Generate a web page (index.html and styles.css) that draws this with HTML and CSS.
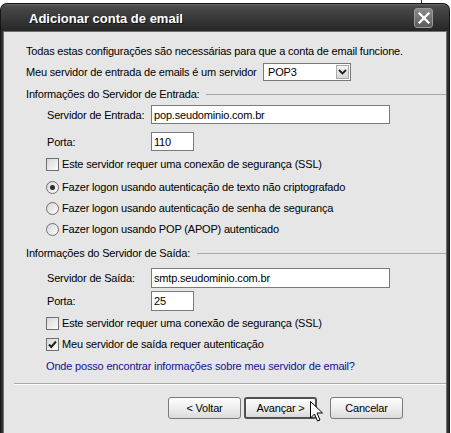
FILE: index.html
```html
<!DOCTYPE html>
<html lang="pt-BR">
<head>
    <meta charset="UTF-8" />
    <title>Adicionar conta de email</title>
    <link rel="stylesheet" href="styles.css">
</head>
<body>
    <div class="window">
        <div class="titlebar">
            <span class="title">Adicionar conta de email</span>
            <span class="close">
                <svg width="12" height="12" viewBox="0 0 12 12"><path d="M1.5 1.5 L10.5 10.5 M10.5 1.5 L1.5 10.5" stroke="#fff" stroke-width="2.2" stroke-linecap="square"/></svg>
            </span>
        </div>
        <div class="frame">
            <div class="client">
                <div class="row r-intro">Todas estas configurações são necessárias para que a conta de email funcione.</div>
                <div class="row r-type">
                    <span class="type-label">Meu servidor de entrada de emails é um servidor</span>
                    <div class="select">
                        <span class="select-value">POP3</span>
                        <span class="drop">
                            <svg width="9" height="6" viewBox="0 0 9 6"><path d="M1 1 L4.5 4.5 L8 1" fill="none" stroke="#222" stroke-width="1.8"/></svg>
                        </span>
                    </div>
                </div>

                <div class="group-head gh-in"><span>Informações do Servidor de Entrada:</span><span class="rule"></span></div>
                <div class="row sub r-field">
                    <span class="flabel">Servidor de Entrada:</span>
                    <div class="input wide">pop.seudominio.com.br</div>
                </div>
                <div class="row sub r-port">
                    <span class="flabel">Porta:</span>
                    <div class="input short">110</div>
                </div>
                <div class="row sub r-ssl">
                    <span class="check"></span>
                    <span>Este servidor requer uma conexão de segurança (SSL)</span>
                </div>
                <div class="row sub r-rad1">
                    <span class="radio on"></span>
                    <span>Fazer logon usando autenticação de texto não criptografado</span>
                </div>
                <div class="row sub r-rad2">
                    <span class="radio"></span>
                    <span>Fazer logon usando autenticação de senha de segurança</span>
                </div>
                <div class="row sub r-rad3">
                    <span class="radio"></span>
                    <span>Fazer logon usando POP (APOP) autenticado</span>
                </div>

                <div class="group-head gh-out"><span>Informações do Servidor de Saída:</span><span class="rule"></span></div>
                <div class="row sub r-field2">
                    <span class="flabel">Servidor de Saída:</span>
                    <div class="input wide">smtp.seudominio.com.br</div>
                </div>
                <div class="row sub r-port2">
                    <span class="flabel">Porta:</span>
                    <div class="input short">25</div>
                </div>
                <div class="row sub r-ssl2">
                    <span class="check"></span>
                    <span>Este servidor requer uma conexão de segurança (SSL)</span>
                </div>
                <div class="row sub r-auth">
                    <span class="check">
                        <svg width="11" height="11" viewBox="0 0 11 11"><path d="M2 5.5 L4.3 8 L9 2.5" fill="none" stroke="#222" stroke-width="2"/></svg>
                    </span>
                    <span>Meu servidor de saída requer autenticação</span>
                </div>
                <div class="row sub r-link"><a class="help" href="#">Onde posso encontrar informações sobre meu servidor de email?</a></div>

                <div class="separator"></div>

                <div class="buttons">
                    <span class="btn">&lt; Voltar</span>
                    <span class="btn default">Avançar &gt;</span>
                    <span class="btn cancel">Cancelar</span>
                </div>
            </div>
        </div>

        <!-- mouse pointer resting on the Avançar button -->
        <svg class="cursor" width="14" height="22" viewBox="0 0 14 22"><path d="M0.5 0.5 V17 L4.5 13 L7.5 20 L10 19 L7 12 H12.5 Z" fill="#fff" stroke="#000" stroke-width="1"/></svg>
    </div>
</body>
</html>
```

FILE: styles.css
```css
body {
    margin: 0;
    font-family: "Liberation Sans", Arial, sans-serif;
    font-size: 11px;
    color: #000;
    background: #fff linear-gradient(#2a2a2a, #2a2a2a) 421px 0 / 1px 4px no-repeat;
}

.window {
    position: relative;
    margin-top: 3px;
    width: 450px;
    height: 430px;
    box-sizing: border-box;
    border: 1px solid #151515;
    border-bottom: none;
    border-radius: 7px 7px 0 0;
    background: #2f2f2f;
    display: flex;
    flex-direction: column;
    overflow: hidden;
}

.titlebar {
    height: 27px;
    flex: 0 0 27px;
    display: flex;
    align-items: center;
    padding-left: 28px;
    background: linear-gradient(#6a6a6a 0, #4a4a4a 2px, #3a3a3a 50%, #262626 100%);
}

.title {
    color: #fff;
    font-weight: bold;
    font-size: 13px;
    text-shadow: 1px 1px 0 #111;
    padding-top: 1px;
}

.close {
    margin-left: auto;
    margin-right: 16px;
    width: 17px;
    height: 18px;
    border: 1px solid #9a9a9a;
    border-radius: 3px;
    background: linear-gradient(#8c8c8c, #5c5c5c);
    display: flex;
    align-items: center;
    justify-content: center;
}

.frame {
    flex: 1;
    display: flex;
    padding: 0 2px 0 2px;
}

.client {
    flex: 1;
    display: flex;
    flex-direction: column;
    background: #e6e6e6;
    border: 1px solid #707070;
    border-bottom: none;
    padding: 10px 0 0 22px;
    letter-spacing: -0.18px;
}

.row {
    display: flex;
    align-items: center;
    white-space: nowrap;
}

.sub {
    padding-left: 21px;
}

.r-intro { height: 18px; }
.r-type { height: 23px; }
.r-field { height: 19px; }
.r-port { height: 19px; margin-top: 8px; }
.r-ssl { height: 26px; padding-left: 20px; }
.r-rad1 { height: 20px; padding-left: 20px; }
.r-rad2 { height: 22px; padding-left: 20px; }
.r-rad3 { height: 20px; padding-left: 20px; }
.r-field2 { height: 20px; margin-top: 1px; }
.r-port2 { height: 20px; margin-top: 3px; }
.r-ssl2 { height: 24px; padding-left: 20px; }
.r-auth { height: 18px; padding-left: 20px; }
.r-link { height: 26px; padding-left: 20px; }

.type-label {
    flex: 0 0 237px;
}

.select {
    width: 86px;
    height: 16px;
    border: 1px solid #7a7a7a;
    background: #fff;
    display: flex;
    align-items: center;
}

.select-value {
    padding-left: 4px;
    flex: 1;
}

.drop {
    width: 13px;
    height: 14px;
    margin-right: 1px;
    border: 1px solid #a9a9a9;
    box-sizing: border-box;
    background: linear-gradient(#f4f4f4, #d6d6d6);
    display: flex;
    align-items: center;
    justify-content: center;
}

.group-head {
    display: flex;
    align-items: center;
    white-space: nowrap;
}

.gh-in { height: 22px; }
.gh-out { height: 28px; }

.rule {
    flex: 1;
    height: 0;
    margin-left: 7px;
    border-top: 1px solid #a8a8a8;
}

.flabel {
    flex: 0 0 104px;
}

.input {
    box-sizing: border-box;
    height: 100%;
    border: 1px solid #7a7a7a;
    background: #fff;
    padding-left: 2px;
    display: flex;
    align-items: center;
}

.wide { width: 239px; }
.short { width: 43px; }

.check {
    width: 13px;
    height: 13px;
    box-sizing: border-box;
    border: 1px solid #6f6f6f;
    background: linear-gradient(135deg, #d8d8d8, #fbfbfb);
    margin-right: 3px;
    display: flex;
    align-items: center;
    justify-content: center;
}

.radio {
    width: 13px;
    height: 13px;
    box-sizing: border-box;
    border: 1px solid #6f6f6f;
    border-radius: 50%;
    background: linear-gradient(135deg, #d8d8d8, #fbfbfb);
    margin-right: 3px;
    display: flex;
    align-items: center;
    justify-content: center;
}

.radio.on::after {
    content: "";
    width: 5px;
    height: 5px;
    border-radius: 50%;
    background: #2a2a2a;
}

.help {
    color: #12128c;
    text-decoration: none;
}

.separator {
    margin: 4px 0 0 -12px;
    border-top: 1px solid #a8a8a8;
    border-bottom: 1px solid #fbfbfb;
}

.buttons {
    margin-top: 12px;
    display: flex;
    justify-content: flex-end;
    gap: 3px;
    padding-right: 43px;
}

.btn {
    width: 73px;
    height: 22px;
    box-sizing: border-box;
    border: 1px solid #7a7a7a;
    border-radius: 3px;
    background: linear-gradient(#fdfdfd, #ebebeb 60%, #d9d9d9);
    display: flex;
    align-items: center;
    justify-content: center;
}

.btn.default {
    border: 2px solid #505050;
}

.btn.cancel {
    margin-left: 10px;
}

.cursor {
    position: absolute;
    left: 309px;
    top: 397px;
}
```
